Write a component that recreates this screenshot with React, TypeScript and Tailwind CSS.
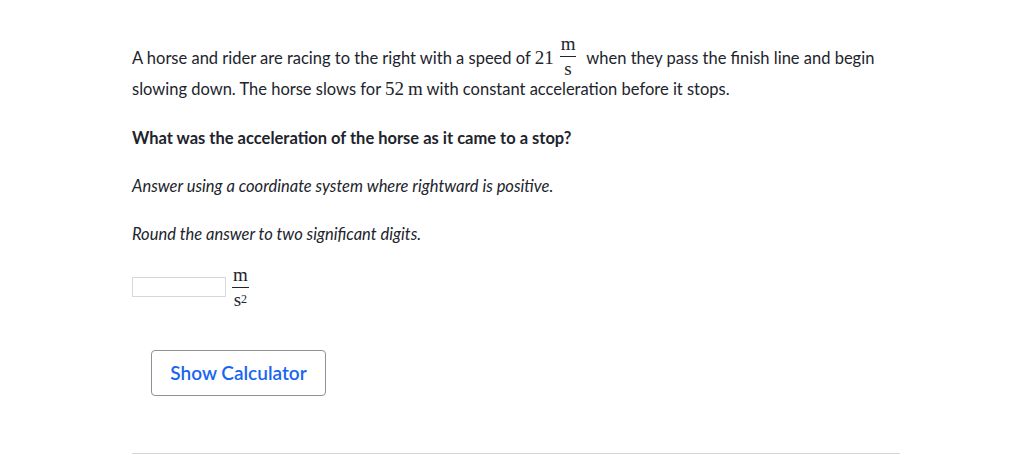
import React from "react";

function Frac({ num, den, tight }: { num: React.ReactNode; den: React.ReactNode; tight?: boolean }) {
  return (
    <span
      className={
        "inline-flex flex-col items-center align-middle mx-[6px] font-['Liberation_Serif',serif] text-[19px] leading-[19px] " +
        (tight ? "-my-[8px] relative -top-[4px]" : "")
      }
    >
      <span className="px-[1px] pb-[3px]">{num}</span>
      <span className="h-px w-full bg-[#21242c]" />
      <span className="px-[1px] pt-[2px]">{den}</span>
    </span>
  );
}

export default function App() {
  return (
    <div className="w-[1024px] h-[473px] bg-white font-['Lato',sans-serif] text-[#21242c] text-[16.5px]">
      <div className="ml-[132px] w-[768px] pt-[43px]">
        <p className="leading-[30px] mb-[22px]">
          A horse and rider are racing to the right with a speed of{" "}
          <span className="font-['Liberation_Serif',serif] text-[19px]">21</span>
          <Frac num="m" den="s" tight />
          {" "}when they pass the finish line and begin slowing down. The horse slows for{" "}
          <span className="font-['Liberation_Serif',serif] text-[19px]">52&thinsp;m</span> with constant acceleration before it stops.
        </p>
        <p className="font-bold leading-[24px] mb-[24px]">What was the acceleration of the horse as it came to a stop?</p>
        <p className="italic leading-[24px] mb-[24px]">Answer using a coordinate system where rightward is positive.</p>
        <p className="italic leading-[24px] mb-[19px]">Round the answer to two significant digits.</p>
        <div className="flex items-center h-[44px]">
          <div className="w-[94px] h-[20px] border border-[#d6d8da] bg-white" />
          <span className="ml-[0px]">
            <Frac num="m" den={<span>s<sup className="text-[12px] relative -top-[3px]">2</sup></span>} />
          </span>
        </div>
        <div className="mt-[41px] ml-[19px]">
          <button className="w-[175px] h-[46px] border border-[#8f9194] rounded-[4px] text-[#1865f2] text-[19px] font-semibold bg-white">
            Show Calculator
          </button>
        </div>
        <div className="mt-[57px] h-px bg-[#d6d8da]" />
      </div>
    </div>
  );
}
